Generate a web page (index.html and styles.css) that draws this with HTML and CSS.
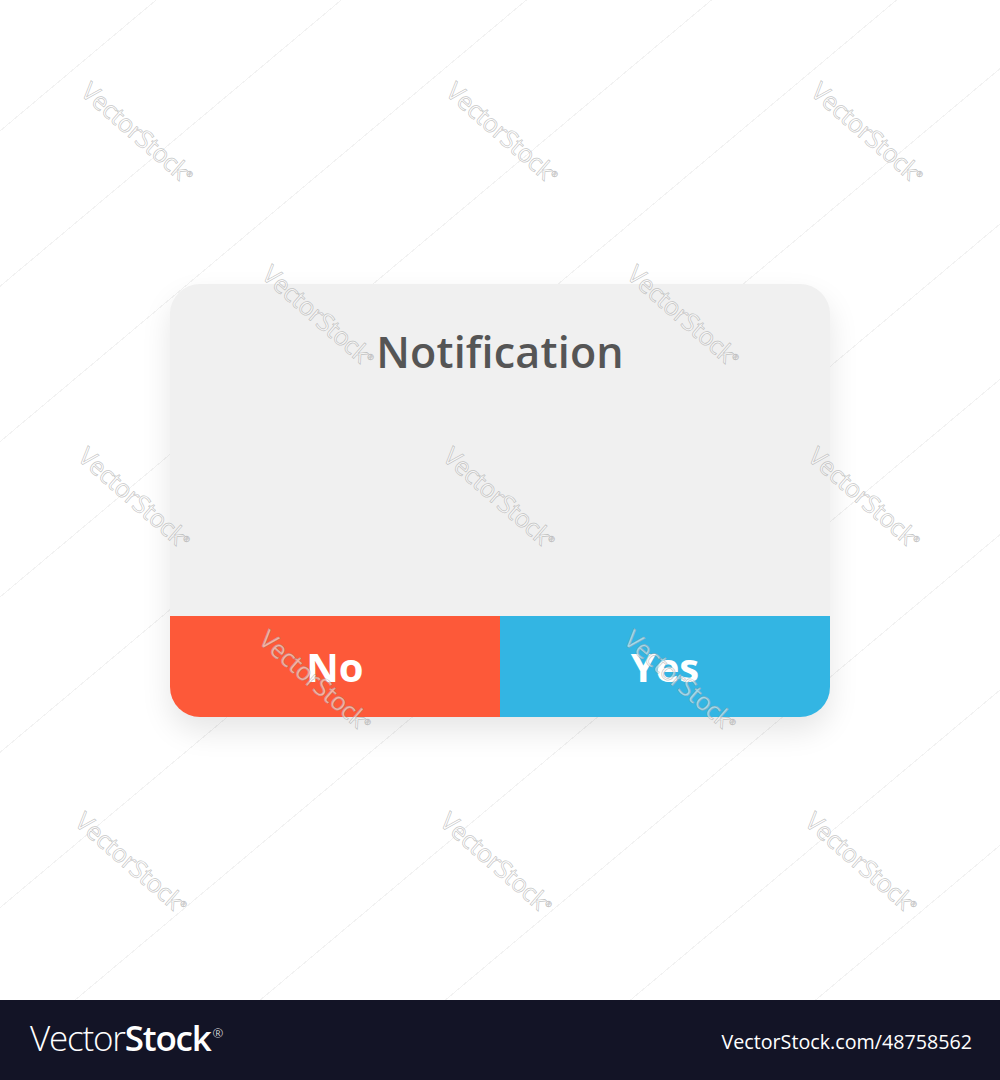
FILE: index.html
```html
<!DOCTYPE html>
<html lang="en">
<head>
    <meta charset="UTF-8">
    <meta name="viewport" content="width=device-width, initial-scale=1.0">
    <title>Notification</title>
    <link rel="stylesheet" href="styles.css">
</head>
<body>
    <!-- Dialog area -->
    <div class="stage">
        <div class="dialog">
            <div class="dialog-body">
                <h1>Notification</h1>
            </div>
            <div class="dialog-actions">
                <button class="btn btn-no">No</button>
                <button class="btn btn-yes">Yes</button>
            </div>
        </div>
        <div class="marks" id="marks"></div>
    </div>

    <!-- Footer bar -->
    <div class="footer">
        <div class="logo"><span class="thin">Vector</span><span class="bold">Stock</span><sup>&reg;</sup></div>
        <div class="ref">VectorStock.com/48758562</div>
    </div>

    <script src="marks.js"></script>
</body>
</html>
```

FILE: styles.css
```css
/* General body styling */
body {
    margin: 0;
    padding: 0;
    background: #ffffff;
    font-family: 'Open Sans', sans-serif;
}

/* Dialog area */
.stage {
    position: relative;
    height: 1000px;
    display: flex;
    justify-content: center;
    align-items: center;
    overflow: hidden;
    background: repeating-linear-gradient(-40deg, transparent 0, transparent 118px, rgba(0, 0, 0, 0.05) 118px, rgba(0, 0, 0, 0.05) 119px);
}

.dialog {
    width: 660px;
    height: 433px;
    background: #f0f0f0;
    border-radius: 30px;
    overflow: hidden;
    display: flex;
    flex-direction: column;
    box-shadow: 0 14px 30px rgba(0, 0, 0, 0.1);
}

.dialog-body {
    flex: 1;
    text-align: center;
}

.dialog-body h1 {
    margin: 38px 0 0;
    font-size: 43px;
    font-weight: 600;
    color: #555555;
    letter-spacing: 0.2px;
}

/* Buttons */
.dialog-actions {
    display: flex;
    height: 101px;
}

.btn {
    flex: 1;
    border: none;
    color: #ffffff;
    font-family: 'Open Sans', sans-serif;
    font-size: 40px;
    font-weight: 700;
    cursor: pointer;
    padding: 0;
}

.btn-no {
    background: #fd5939;
}

.btn-yes {
    background: #33b5e3;
}

/* Watermark layer */
.marks {
    position: absolute;
    inset: 0;
    pointer-events: none;
}

.mark {
    position: absolute;
    font-family: 'Open Sans', sans-serif;
    font-size: 25px;
    font-weight: 400;
    color: rgba(255, 255, 255, 0.55);
    -webkit-text-stroke: 0.7px rgba(150, 150, 150, 0.55);
    transform: translate(-50%, -50%) rotate(41deg);
    white-space: nowrap;
    letter-spacing: -0.5px;
}

.mark sup {
    font-size: 8px;
    -webkit-text-stroke: 0.4px rgba(150, 150, 150, 0.6);
}

/* Footer bar */
.footer {
    height: 80px;
    background: #131426;
    color: #ffffff;
    display: flex;
    justify-content: space-between;
    align-items: center;
    padding: 0 28px 0 30px;
}

.logo {
    font-family: 'Open Sans', sans-serif;
    font-size: 35px;
    letter-spacing: -1.2px;
    margin-top: -6px;
}

.logo .thin {
    font-weight: 300;
}

.logo .bold {
    font-weight: 600;
}

.logo sup {
    font-size: 13px;
    font-weight: 300;
    margin-left: 2px;
}

.ref {
    font-family: 'Open Sans', sans-serif;
    font-size: 19.7px;
    margin-bottom: -2px;
}
```

FILE: marks.js
```js
// scatter the diagonal watermark labels over the stage
var layer = document.getElementById('marks');
var rows = [132, 315, 497, 680, 862];
rows.forEach(function (y, i) {
    var cols = i % 2 === 0 ? [138, 503, 868] : [320, 685];
    cols.forEach(function (x) {
        var el = document.createElement('span');
        el.className = 'mark';
        el.innerHTML = 'VectorStock<sup>&reg;</sup>';
        el.style.left = (x - i * 1.5) + 'px';
        el.style.top = y + 'px';
        layer.appendChild(el);
    });
});
```
